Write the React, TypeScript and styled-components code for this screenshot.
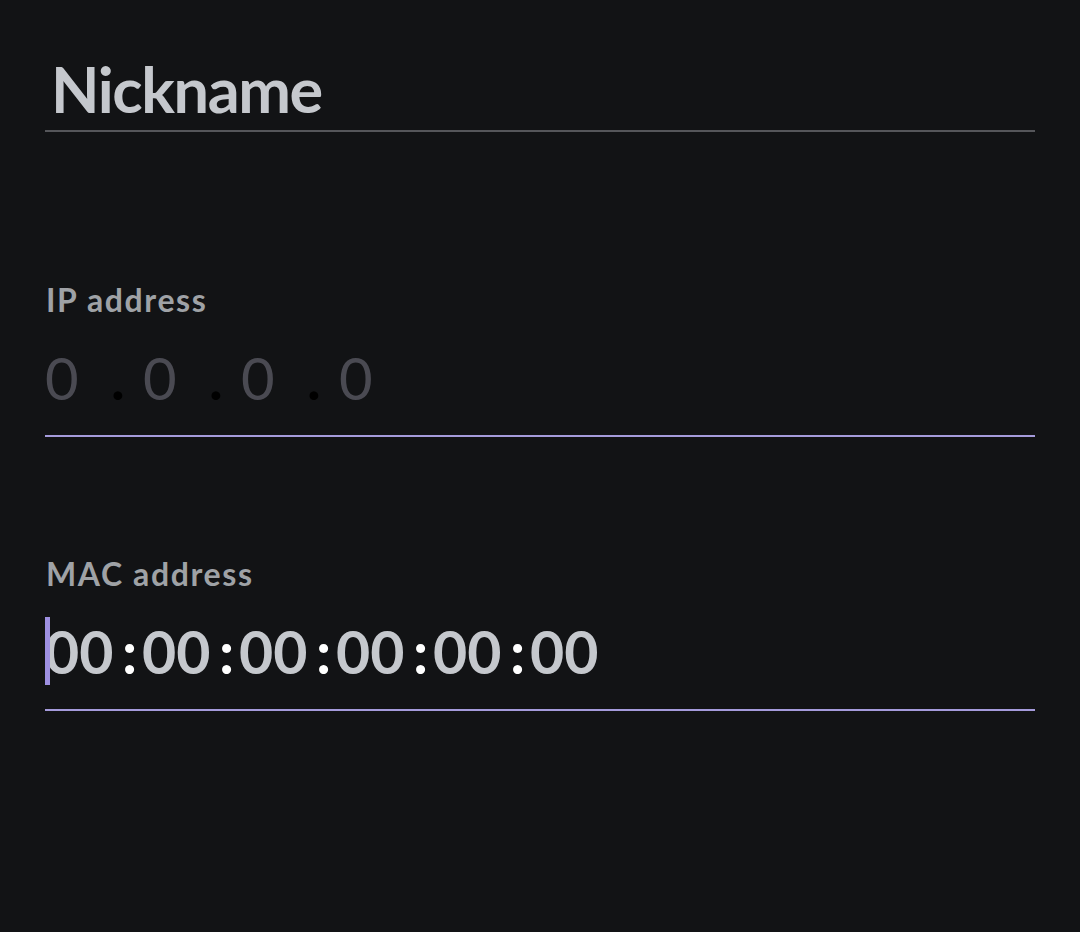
import React from "react";
import styled, { createGlobalStyle } from "styled-components";

const Global = createGlobalStyle`
  html, body { margin: 0; padding: 0; background: #121315; }
  body { font-family: Lato, "Noto Sans", sans-serif; }
`;

const Page = styled.div`
  min-height: 932px;
  background: #121315;
  padding: 51px 45px 0 45px;
  box-sizing: border-box;
  width: 1080px;
  display: flex;
  flex-direction: column;
`;

const NickField = styled.div`
  width: 990px;
  padding: 0 0 3px 6px;
  box-sizing: border-box;
  border-bottom: 2px solid #55565a;
  color: #c5c8cd;
  font-size: 63px;
  font-weight: 700;
  line-height: 76px;
  letter-spacing: -1.4px;
`;

const Label = styled.div<{ $top: number }>`
  margin-top: ${(p) => p.$top}px;
  padding-left: 1px;
  color: #9fa2a6;
  font-size: 32px;
  font-weight: 700;
  line-height: 40px;
  letter-spacing: 1.6px;
`;

const Field = styled.div<{ $size: number }>`
  margin-top: 23px;
  width: 990px;
  box-sizing: border-box;
  border-bottom: 2px solid #a59bdb;
  padding-bottom: 22px;
  display: flex;
  align-items: flex-start;
  position: relative;
  font-size: ${(p) => p.$size}px;
  line-height: 70px;
  height: 94px;
`;

const Segment = styled.div<{ $w: number }>`
  width: ${(p) => p.$w}px;
  display: flex;
  flex: none;
`;

const Digits = styled.span<{ $w: number; $color: string; $weight: number }>`
  width: ${(p) => p.$w}px;
  flex: none;
  color: ${(p) => p.$color};
  font-weight: ${(p) => p.$weight};
`;

const Sep = styled.span<{ $color: string; $weight: number }>`
  color: ${(p) => p.$color};
  font-weight: ${(p) => p.$weight};
`;

const Caret = styled.span`
  position: absolute;
  left: 0;
  top: 0;
  width: 5px;
  height: 68px;
  background: #9d8fe0;
`;

export default function App() {
  const ip = ["0", "0", "0", "0"];
  const mac = ["00", "00", "00", "00", "00", "00"];
  return (
    <>
      <Global />
      <Page>
        <NickField>Nickname</NickField>

        <Label $top={148}>IP address</Label>
        <Field $size={58}>
          {ip.map((d, i) => (
            <Segment key={i} $w={98}>
              <Digits $w={66} $color="#4a4a52" $weight={400}>
                {d}
              </Digits>
              {i < ip.length - 1 && (
                <Sep $color="#000" $weight={700}>
                  .
                </Sep>
              )}
            </Segment>
          ))}
        </Field>

        <Label $top={117}>MAC address</Label>
        <Field $size={59}>
          <Caret />
          {mac.map((d, i) => (
            <Segment key={i} $w={97}>
              <Digits $w={77} $color="#c5c8cd" $weight={700}>
                {d}
              </Digits>
              {i < mac.length - 1 && (
                <Sep $color="#ffffff" $weight={700}>
                  :
                </Sep>
              )}
            </Segment>
          ))}
        </Field>
      </Page>
    </>
  );
}
